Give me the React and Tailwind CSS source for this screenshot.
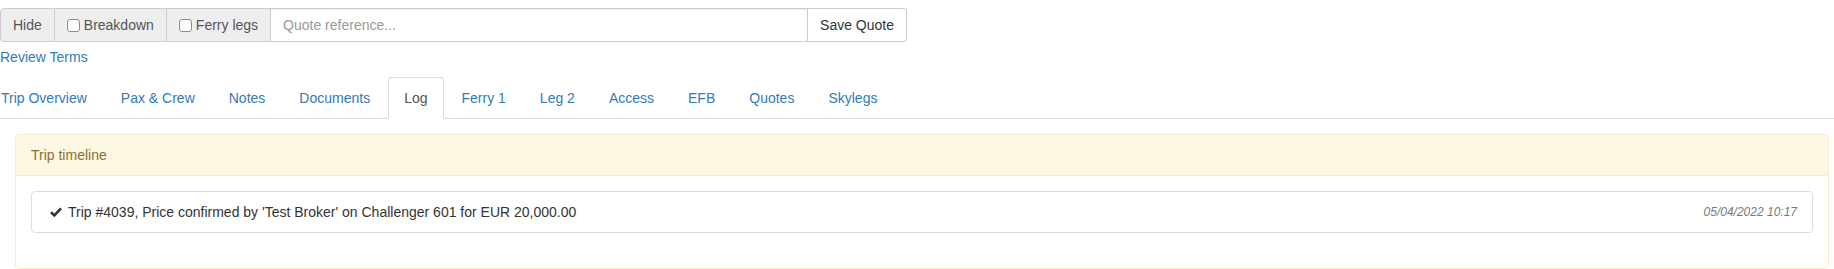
import { useState } from 'react';

const TABS = [
  'Trip Overview',
  'Pax & Crew',
  'Notes',
  'Documents',
  'Log',
  'Ferry 1',
  'Leg 2',
  'Access',
  'EFB',
  'Quotes',
  'Skylegs',
];

function CheckBox({ checked, onChange }) {
  return (
    <input
      type="checkbox"
      checked={checked}
      onChange={onChange}
      className="appearance-none m-0 mr-[4px] w-[13px] h-[13px] border border-[#8e8e8e] rounded-[3px] bg-white shrink-0"
    />
  );
}

export default function App() {
  const [breakdown, setBreakdown] = useState(false);
  const [ferry, setFerry] = useState(false);
  const [active, setActive] = useState('Log');

  return (
    <div className="font-['Liberation_Sans',Arial,sans-serif] text-[14px] leading-[20px] text-[#333] bg-white min-h-[269px]">
      {/* ─── QUOTE TOOLBAR ─────────────────────── */}
      <div className="pt-[8px]">
        <div className="flex w-[907px] h-[34px]">
          <button className="px-[12px] bg-[#eee] text-[#555] border border-[#ccc] rounded-l-[4px]">
            Hide
          </button>
          <label className="flex items-center px-[12px] bg-[#eee] text-[#555] border border-l-0 border-[#ccc]">
            <CheckBox checked={breakdown} onChange={() => setBreakdown(!breakdown)} />
            Breakdown
          </label>
          <label className="flex items-center px-[12px] bg-[#eee] text-[#555] border border-l-0 border-[#ccc]">
            <CheckBox checked={ferry} onChange={() => setFerry(!ferry)} />
            Ferry legs
          </label>
          <input
            type="text"
            placeholder="Quote reference..."
            className="flex-1 min-w-0 px-[12px] border border-l-0 border-[#ccc] text-[#555] placeholder:text-[#999] outline-none shadow-[inset_0_1px_1px_rgba(0,0,0,0.075)]"
          />
          <button className="px-[12px] bg-white text-[#333] border border-l-0 border-[#ccc] rounded-r-[4px]">
            Save Quote
          </button>
        </div>
      </div>

      <a href="#" className="block mt-[5px] w-fit text-[#337ab7]">
        Review Terms
      </a>

      {/* ─── TABS ──────────────────────────────── */}
      <ul className="flex mt-[10px] -ml-[15px] border-b border-[#ddd]">
        {TABS.map((tab) => (
          <li key={tab} className="-mb-px">
            <a
              href="#"
              onClick={(e) => {
                e.preventDefault();
                setActive(tab);
              }}
              className={
                tab === active
                  ? 'block mr-[2px] px-[15px] py-[10px] border border-[#ddd] border-b-white bg-white rounded-t-[4px] text-[#555]'
                  : 'block mr-[2px] px-[15px] py-[10px] border border-transparent rounded-t-[4px] text-[#337ab7]'
              }
            >
              {tab}
            </a>
          </li>
        ))}
      </ul>

      {/* ─── TIMELINE PANEL ────────────────────── */}
      <div className="mt-[15px] ml-[15px] mr-[5px] border border-[#faebcc] rounded-[4px]">
        <div className="px-[15px] py-[10px] bg-[#fcf8e3] text-[#8a6d3b] border-b border-[#faebcc] rounded-t-[3px]">
          Trip timeline
        </div>
        <div className="p-[15px]">
          <div className="mb-[20px] flex items-center justify-between px-[15px] py-[10px] border border-[#ddd] rounded-[4px]">
            <div className="flex items-center">
              <svg viewBox="0 0 12 10" className="ml-[3px] mr-[6px] w-[12px] h-[10px]">
                <path d="M1 5.2 L4.4 8.4 L11 1.4" fill="none" stroke="#333" strokeWidth="2.6" />
              </svg>
              <span>Trip #4039, Price confirmed by 'Test Broker' on Challenger 601 for EUR 20,000.00</span>
            </div>
            <span className="text-[12px] italic text-[#777]">05/04/2022 10:17</span>
          </div>
        </div>
      </div>
    </div>
  );
}
